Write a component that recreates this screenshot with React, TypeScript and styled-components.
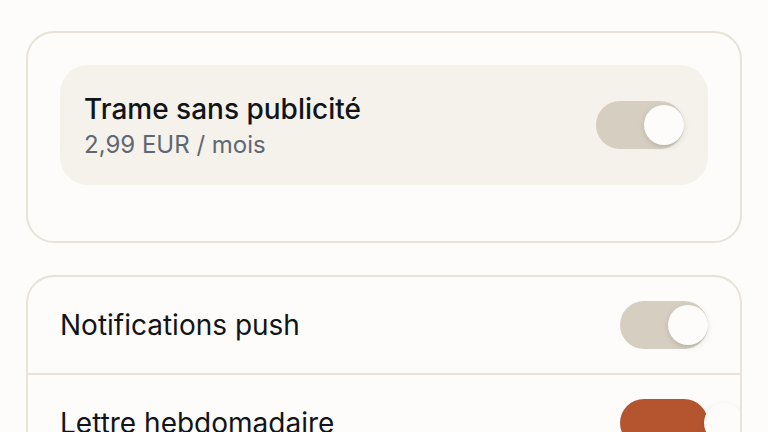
import React, { useState } from "react";
import styled, { createGlobalStyle } from "styled-components";

const GlobalStyle = createGlobalStyle`
  *, *::before { box-sizing: border-box; }
  body {
    margin: 0;
    background: #fdfcfa;
    color: #111418;
    font-family: Inter, "Liberation Sans", sans-serif;
  }
`;

const Page = styled.main`
  display: flex;
  flex-direction: column;
  gap: 32px;
  padding: 31px 26px;
`;

const Card = styled.section`
  border: 2px solid #e8e2d8;
  border-radius: 28px;
  overflow: hidden;
`;

const OfferCard = styled(Card)`
  padding: 32px 32px 56px;
`;

const Row = styled.label`
  display: flex;
  align-items: center;
  justify-content: space-between;
  gap: 24px;
  cursor: pointer;
`;

const OfferRow = styled(Row)`
  padding: 24px;
  border-radius: 28px;
  background: #f5f2eb;
`;

const SettingRow = styled(Row)`
  padding: 24px 32px;

  & + & {
    border-top: 2px solid #e8e2d8;
  }
`;

const OfferText = styled.span`
  display: flex;
  flex-direction: column;
`;

const Label = styled.span<{ $strong?: boolean }>`
  font-size: 28px;
  line-height: 40px;
  font-weight: ${(p) => (p.$strong ? 500 : 400)};
`;

const Price = styled.span`
  font-size: 24px;
  line-height: 32px;
  color: #5f6773;
`;

const Switch = styled.input`
  appearance: none;
  flex: none;
  display: flex;
  align-items: center;
  width: 88px;
  height: 48px;
  margin: 0;
  padding-left: 48px;
  border-radius: 24px;
  background: #d6cec1;
  cursor: pointer;

  &::before {
    content: "";
    flex: none;
    width: 40px;
    height: 40px;
    border-radius: 50%;
    background: #fdfcfa;
    box-shadow: 0 2px 6px rgba(0, 0, 0, 0.1), 0 2px 4px -2px rgba(0, 0, 0, 0.1);
  }

  &:checked {
    background: #b5552f;
  }

  &:checked::before {
    transform: translateX(36px);
  }
`;

function Toggle({ id, initial = false }: { id: string; initial?: boolean }) {
  const [on, setOn] = useState(initial);
  return (
    <Switch
      id={id}
      type="checkbox"
      role="switch"
      checked={on}
      onChange={(e) => setOn(e.target.checked)}
    />
  );
}

const settings = [
  { id: "push", label: "Notifications push", on: false },
  { id: "newsletter", label: "Lettre hebdomadaire", on: true },
];

export default function App() {
  return (
    <>
      <GlobalStyle />
      <Page>
        <OfferCard>
          <OfferRow htmlFor="ad-free">
            <OfferText>
              <Label $strong>Trame sans publicité</Label>
              <Price>2,99 EUR / mois</Price>
            </OfferText>
            <Toggle id="ad-free" />
          </OfferRow>
        </OfferCard>
        <Card>
          {settings.map((s) => (
            <SettingRow key={s.id} htmlFor={s.id}>
              <Label>{s.label}</Label>
              <Toggle id={s.id} initial={s.on} />
            </SettingRow>
          ))}
        </Card>
      </Page>
    </>
  );
}
